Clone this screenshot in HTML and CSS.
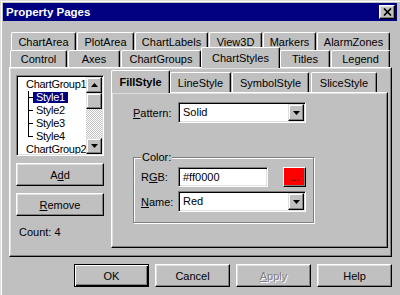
FILE: index.html
```html
<!DOCTYPE html>
<html lang="en">
<head>
    <meta charset="UTF-8">
    <title>Property Pages</title>
    <link rel="stylesheet" href="styles.css">
</head>
<body>
<div class="window">
    <div class="titlebar">
        <span class="title">Property Pages</span>
        <span class="close-btn">
            <svg width="9" height="8" viewBox="0 0 9 8"><path d="M1 0.5 L8 7.5 M8 0.5 L1 7.5" stroke="#000" stroke-width="1.7"/></svg>
        </span>
    </div>

    <div class="sheet">
        <div class="tab-row back">
            <div class="tab t-chartarea">ChartArea</div>
            <div class="tab t-plotarea">PlotArea</div>
            <div class="tab t-chartlabels">ChartLabels</div>
            <div class="tab t-view3d">View3D</div>
            <div class="tab t-markers">Markers</div>
            <div class="tab t-alarmzones">AlarmZones</div>
        </div>
        <div class="tab-row front">
            <div class="tab t-control">Control</div>
            <div class="tab t-axes">Axes</div>
            <div class="tab t-chartgroups">ChartGroups</div>
            <div class="tab sel t-chartstyles">ChartStyles</div>
            <div class="tab t-titles">Titles</div>
            <div class="tab t-legend">Legend</div>
        </div>

        <div class="panel">
            <div class="left-col">
                <div class="listbox">
                    <div class="tree">
                        <div class="node"><span class="label">ChartGroup1</span></div>
                        <div class="node child"><span class="label selected">Style1</span></div>
                        <div class="node child"><span class="label">Style2</span></div>
                        <div class="node child"><span class="label">Style3</span></div>
                        <div class="node child last"><span class="label">Style4</span></div>
                        <div class="node"><span class="label">ChartGroup2</span></div>
                    </div>
                    <div class="scrollbar">
                        <div class="sb-btn"><svg width="7" height="4" viewBox="0 0 7 4"><polygon points="3.5,0 7,4 0,4" fill="#000"/></svg></div>
                        <div class="sb-thumb"></div>
                        <div class="sb-track"></div>
                        <div class="sb-btn"><svg width="7" height="4" viewBox="0 0 7 4"><polygon points="0,0 7,0 3.5,4" fill="#000"/></svg></div>
                    </div>
                </div>
                <div class="btn btn-add">A<u>d</u>d</div>
                <div class="btn btn-remove"><u>R</u>emove</div>
                <div class="count">Count: 4</div>
            </div>

            <div class="subtabs">
                <div class="subtab-row">
                    <div class="tab subtab sel s-fill">FillStyle</div>
                    <div class="tab subtab s-line">LineStyle</div>
                    <div class="tab subtab s-symbol">SymbolStyle</div>
                    <div class="tab subtab s-slice">SliceStyle</div>
                </div>
                <div class="subpanel">
                    <div class="field-row">
                        <span class="field-label pattern-label"><u>P</u>attern:</span>
                        <div class="combo combo-pattern">
                            <span class="combo-text">Solid</span>
                            <span class="combo-btn"><svg width="7" height="4" viewBox="0 0 7 4"><polygon points="0,0 7,0 3.5,4" fill="#000"/></svg></span>
                        </div>
                    </div>

                    <div class="groupbox">
                        <span class="legend">Color:</span>
                        <div class="field-row">
                            <span class="field-label">R<u>G</u>B:</span>
                            <div class="textbox">#ff0000</div>
                            <div class="color-btn">...</div>
                        </div>
                        <div class="field-row name-row">
                            <span class="field-label"><u>N</u>ame:</span>
                            <div class="combo combo-name">
                                <span class="combo-text">Red</span>
                                <span class="combo-btn"><svg width="7" height="4" viewBox="0 0 7 4"><polygon points="0,0 7,0 3.5,4" fill="#000"/></svg></span>
                            </div>
                        </div>
                    </div>
                </div>
            </div>
        </div>

        <div class="dialog-buttons">
            <div class="btn btn-dialog default">OK</div>
            <div class="btn btn-dialog">Cancel</div>
            <div class="btn btn-dialog disabled"><u>A</u>pply</div>
            <div class="btn btn-dialog">Help</div>
        </div>
    </div>
</div>
</body>
</html>
```

FILE: styles.css
```css
/* Base */
* {
    box-sizing: border-box;
}

body {
    margin: 0;
    background: #c0c0c0;
    font-family: "Liberation Sans", Arial, sans-serif;
    font-size: 11px;
    color: #000;
}

.window {
    width: 400px;
    height: 295px;
    border-top: 1px solid #dfdfdf;
    border-left: 1px solid #dfdfdf;
    box-shadow: inset 1px 1px #fff;
    padding: 2px 3px 0 2px;
    overflow: hidden;
}

/* Title bar */
.titlebar {
    height: 18px;
    background: #000080;
    color: #fff;
    display: flex;
    align-items: center;
    justify-content: space-between;
    padding: 0 2px 0 3px;
}

.title {
    font-weight: bold;
    font-size: 11.5px;
}

.close-btn {
    width: 16px;
    height: 14px;
    background: #c0c0c0;
    border: 1px solid;
    border-color: #fff #000 #000 #fff;
    box-shadow: inset -1px -1px #808080, inset 1px 1px #dfdfdf;
    display: flex;
    align-items: center;
    justify-content: center;
}

/* Tabs */
.sheet {
    margin-top: 11px;
}

.tab-row {
    display: flex;
    align-items: flex-start;
}

.tab-row.back {
    height: 18px;
    margin-left: 8px;
}

.tab-row.front {
    height: 17px;
    margin-left: 7px;
}

.tab {
    height: 100%;
    display: flex;
    align-items: center;
    justify-content: center;
    margin-right: 1px;
    background: #c0c0c0;
    border: 1px solid;
    border-bottom: none;
    border-color: #fff #000 #000 #fff;
    border-radius: 2px 2px 0 0;
    box-shadow: inset -1px 0 #808080;
    white-space: nowrap;
}

.tab-row.back .tab {
    height: 18px;
}

.tab-row.front .tab {
    height: 17px;
}

.tab-row.front .tab.sel {
    height: 21px;
    margin-top: -3px;
    margin-left: -1px;
    margin-right: 0;
    padding-bottom: 1px;
    position: relative;
    z-index: 1;
}

.t-chartarea { width: 65px; }
.t-plotarea { width: 57px; }
.t-chartlabels { width: 73px; }
.t-view3d { width: 53px; }
.t-markers { width: 53px; }
.t-alarmzones { width: 73px; }
.t-control { width: 57px; }
.t-axes { width: 52px; }
.t-chartgroups { width: 80px; }
.t-chartstyles { width: 79px; }
.t-titles { width: 50px; }
.t-legend { width: 59px; }

/* Main panel */
.panel {
    width: 383px;
    height: 190px;
    margin-left: 6px;
    border: 1px solid;
    border-color: #fff #000 #000 #fff;
    box-shadow: inset -1px -1px #808080, inset 1px 1px #dfdfdf;
    display: flex;
    align-items: flex-start;
    padding: 2px 0 0 6px;
}

.left-col {
    width: 88px;
    margin-top: 5px;
    display: flex;
    flex-direction: column;
}

/* List box with tree */
.listbox {
    height: 81px;
    background: #fff;
    border: 1px solid;
    border-color: #808080 #fff #fff #808080;
    box-shadow: inset 1px 1px #000, inset -1px -1px #dfdfdf;
    padding: 1px;
    display: flex;
}

.tree {
    flex: 1;
    padding-top: 1px;
    overflow: hidden;
}

.node {
    height: 13px;
    line-height: 13px;
    padding-left: 6px;
    white-space: nowrap;
    letter-spacing: -0.3px;
}

.node:last-child {
    height: 12px;
    line-height: 12px;
}

.label {
    display: inline-block;
    padding: 0 2px;
}

.node.child {
    position: relative;
    padding-left: 15px;
}

.node.child .label {
    padding: 0 3px;
}

.node.child::before {
    content: '';
    position: absolute;
    left: 10px;
    top: 0;
    bottom: 0;
    border-left: 1px solid #000;
}

.node.child.last::before {
    bottom: 6px;
}

.node.child::after {
    content: '';
    position: absolute;
    left: 10px;
    top: 6px;
    width: 5px;
    border-top: 1px solid #000;
}

.label.selected {
    background: #000080;
    color: #fff;
    line-height: 11px;
    vertical-align: top;
    margin-top: 1px;
}

.scrollbar {
    width: 16px;
    display: flex;
    flex-direction: column;
    background: repeating-conic-gradient(#c0c0c0 0 25%, #fff 0 50%) 0 0 / 2px 2px;
}

.sb-btn,
.sb-thumb {
    height: 16px;
    background: #c0c0c0;
    border: 1px solid;
    border-color: #dfdfdf #000 #000 #dfdfdf;
    box-shadow: inset -1px -1px #808080, inset 1px 1px #fff;
    display: flex;
    align-items: center;
    justify-content: center;
}

.sb-track {
    flex: 1;
}

/* Buttons */
.btn {
    height: 23px;
    background: #c0c0c0;
    border: 1px solid;
    border-color: #fff #000 #000 #fff;
    box-shadow: inset -1px -1px #808080, inset 1px 1px #dfdfdf;
    display: flex;
    align-items: center;
    justify-content: center;
}

.btn-add {
    margin-top: 7px;
}

.btn-remove {
    margin-top: 7px;
}

.count {
    margin-top: 10px;
    padding-left: 3px;
    line-height: 13px;
}

/* Inner tab control */
.subtabs {
    width: 277px;
    margin-left: 7px;
    display: flex;
    flex-direction: column;
}

.subtab-row {
    height: 22px;
    display: flex;
    align-items: flex-end;
}

.subtab {
    height: 20px;
}

.subtab.sel {
    height: 23px;
    margin-bottom: -1px;
    margin-right: 0;
    padding-bottom: 1px;
    font-weight: bold;
    position: relative;
    z-index: 1;
}

.s-fill { width: 59px; }
.s-line { width: 61px; }
.s-symbol { width: 77px; margin-right: 2px; }
.s-slice { width: 66px; }

.subpanel {
    height: 156px;
    border: 1px solid;
    border-color: #fff #000 #000 #fff;
    box-shadow: inset -1px -1px #808080, inset 1px 1px #dfdfdf;
    padding: 9px 0 0 21px;
}

.field-row {
    display: flex;
    align-items: center;
}

.field-label {
    width: 37px;
}

.pattern-label {
    width: 45px;
}

.combo {
    height: 21px;
    background: #fff;
    border: 1px solid;
    border-color: #808080 #fff #fff #808080;
    box-shadow: inset 1px 1px #000, inset -1px -1px #dfdfdf;
    padding: 1px;
    display: flex;
}

.combo-pattern,
.combo-name {
    width: 128px;
}

.combo-text {
    flex: 1;
    line-height: 17px;
    padding-left: 3px;
}

.combo-btn {
    width: 16px;
    background: #c0c0c0;
    border: 1px solid;
    border-color: #dfdfdf #000 #000 #dfdfdf;
    box-shadow: inset -1px -1px #808080, inset 1px 1px #fff;
    display: flex;
    align-items: center;
    justify-content: center;
}

/* Color group */
.groupbox {
    width: 181px;
    height: 66px;
    margin-top: 34px;
    border: 1px solid #808080;
    box-shadow: inset 1px 1px #fff, 1px 1px #fff;
    padding: 0 0 0 7px;
}

.legend {
    display: block;
    width: max-content;
    margin: -7px 0 3px 0;
    padding: 0 1px;
    background: #c0c0c0;
    line-height: 13px;
}

.textbox {
    width: 90px;
    height: 20px;
    background: #fff;
    border: 1px solid;
    border-color: #808080 #fff #fff #808080;
    box-shadow: inset 1px 1px #000, inset -1px -1px #dfdfdf;
    line-height: 18px;
    padding-left: 4px;
}

.color-btn {
    width: 23px;
    height: 20px;
    margin-left: 15px;
    background: #ff0000;
    border: 1px solid;
    border-color: #fff #000 #000 #fff;
    box-shadow: inset -1px -1px #808080;
    text-align: center;
    line-height: 18px;
}

.name-row {
    margin-top: 4px;
}

/* Dialog buttons */
.dialog-buttons {
    display: flex;
    gap: 6px;
    margin: 7px 0 0 71px;
}

.btn-dialog {
    width: 75px;
}

.btn-dialog.default {
    border-color: #000;
    box-shadow: inset 1px 1px #fff, inset -1px -1px #000, inset -2px -2px #808080;
}

.btn-dialog.disabled {
    color: #808080;
    text-shadow: 1px 1px #fff;
}
```
